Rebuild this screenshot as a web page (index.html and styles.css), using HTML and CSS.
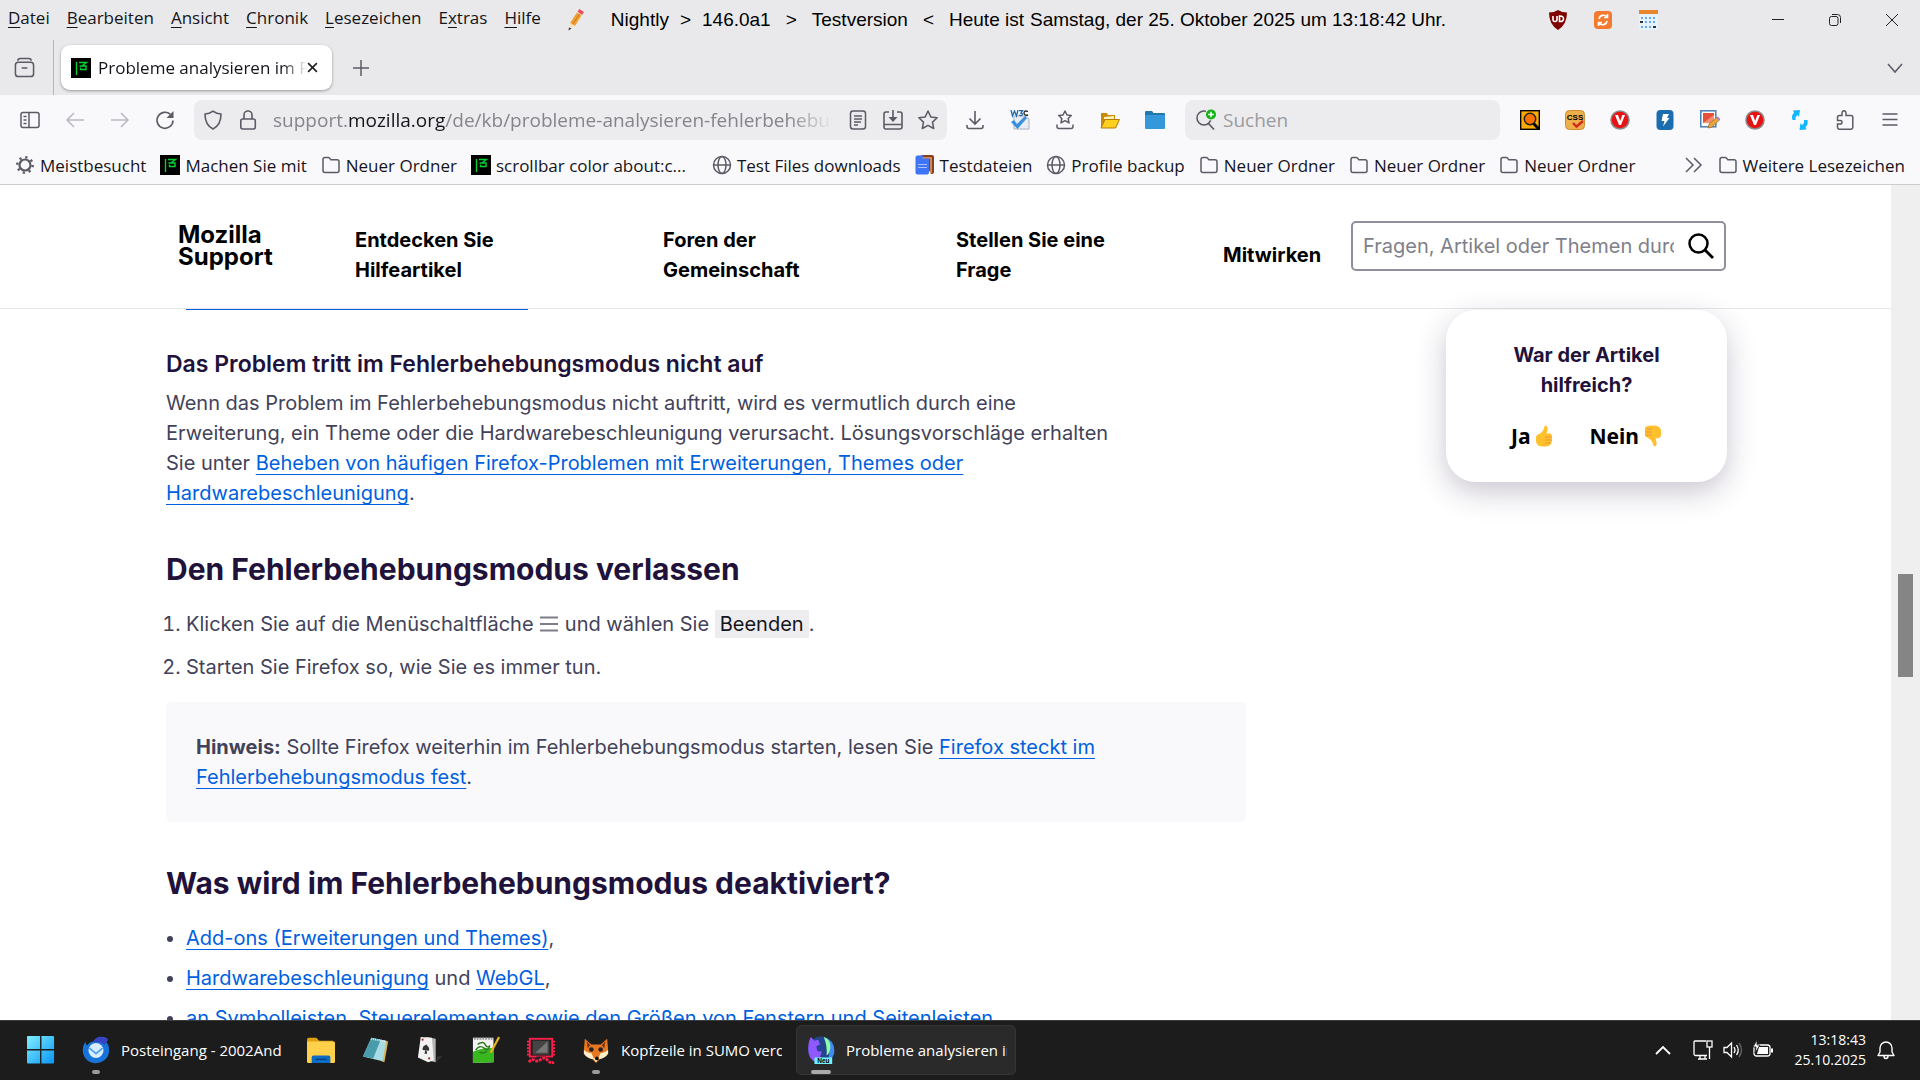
FILE: index.html
```html
<!DOCTYPE html>
<html lang="de">
<head>
<meta charset="UTF-8" />
<meta name="viewport" content="width=device-width, initial-scale=1" />
<title>Probleme analysieren im Fehlerbehebungsmodus</title>
<link rel="stylesheet" href="styles.css">
</head>
<body>

<!-- Wiederverwendete Symbole -->
<svg class="defs" aria-hidden="true">
  <symbol id="folder" viewBox="0 0 20 20"><path d="M2 4.500q0-2 2-2h3.200q.8 0 1.300.6l1.300 1.700h6.200q2 0 2 2v8.700q0 2-2 2H4q-2 0-2-2z" fill="none" stroke="#5b5b66" stroke-width="1.500"/></symbol>
  <symbol id="globe" viewBox="0 0 20 20"><g fill="none" stroke="#5b5b66" stroke-width="1.500"><circle cx="10" cy="10" r="8.500"/><ellipse cx="10" cy="10" rx="4" ry="8.500"/><path d="M1.500 10h17"/></g></symbol>
  <symbol id="moz" viewBox="0 0 20 20"><rect width="20" height="20" fill="#000"/><path d="M5.500 4v13M8 4.500h7.500L11.500 7.500M8.500 8h6.500v3.500H9.500V9.500" fill="none" stroke="#00d230" stroke-width="1.400"/></symbol>
  <symbol id="vred" viewBox="0 0 20 20"><circle cx="10" cy="10" r="9.800" fill="#8c8c8c"/><circle cx="10" cy="10" r="8.300" fill="#e81212"/><path d="M5 5h3l2.200 6L12.300 5H15l-4 10H9z" fill="#fff"/></symbol>
</svg>

<header class="browser">
  <div class="menubar">
    <nav class="menus">
      <button><u>D</u>atei</button>
      <button><u>B</u>earbeiten</button>
      <button><u>A</u>nsicht</button>
      <button><u>C</u>hronik</button>
      <button><u>L</u>esezeichen</button>
      <button>E<u>x</u>tras</button>
      <button><u>H</u>ilfe</button>
    </nav>
    <svg class="pencil" viewBox="0 0 20 22"><path d="M4 14L11 3.500l4.500 3L9 17z" fill="#f0a030"/><path d="M6.500 15.500l7-10.500" stroke="#c9781a" stroke-width="1"/><path d="M11.500 2.800L13.300 0l4.700 3-2 3z" fill="#e8505b"/><path d="M4 14l5 3-5.500 3z" fill="#f5e0c0"/><path d="M3 18.500l2.500 1L2.500 21.500z" fill="#333"/></svg>
    <div class="titletext">
      <span>Nightly</span><span>&gt;</span><span>146.0a1</span><span class="wide">&gt;</span><span class="wide">Testversion</span><span class="wide">&lt;</span><span class="wide">Heute ist</span><span class="near">Samstag, der 25. Oktober 2025 um 13:18:42 Uhr.</span>
    </div>
    <div class="title-icons">
      <button class="tool" aria-label="uBlock"><svg viewBox="0 0 20 20"><path d="M10 0q4 2.500 9 2.500 0 12-9 17.500-9-5.500-9-17.500 5 0 9-2.500z" fill="#800000"/><path d="M5 6v3.500q0 2 2 2t2-2V6M11.500 6v5.500q4 .3 4-2.700t-4-2.800z" fill="none" stroke="#fff" stroke-width="1.600"/></svg></button>
      <button class="tool" aria-label="Neu laden"><svg viewBox="0 0 20 20"><rect x="1" y="1" width="18" height="18" rx="4" fill="#f47a30"/><path d="M6 9a4.500 4.500 0 0 1 8-2M14 11a4.500 4.500 0 0 1-8 2M14.500 4v3.500H11M5.500 16v-3.500H9" fill="none" stroke="#fff" stroke-width="1.600"/></svg></button>
      <button class="tool" aria-label="Kalender"><svg viewBox="0 0 20 20"><rect x="1" width="19" height="20" fill="#e4f2fd"/><rect x="1" width="19" height="4" fill="#e8862a"/><path d="M3 8h14M3 12h15M3 17h14" stroke="#6ca8e0" stroke-width="2" stroke-dasharray="2 2"/><path d="M2 12h3M15 17h3" stroke="#333" stroke-width="2"/></svg></button>
    </div>
    <div class="winbuttons">
      <button aria-label="Minimieren"><svg viewBox="0 0 14 14"><path d="M1 6.500h12" stroke="#222"/></svg></button>
      <button aria-label="Wiederherstellen"><svg viewBox="0 0 14 14"><rect x="1.500" y="3.500" width="8.500" height="9" rx="2" fill="none" stroke="#222"/><path d="M4 1.500h5.500q3 0 3 3V10" fill="none" stroke="#222"/></svg></button>
      <button aria-label="Schließen"><svg viewBox="0 0 14 14"><path d="M1 1l12 12M13 1L1 13" stroke="#222"/></svg></button>
    </div>
  </div>

  <div class="tabstrip">
    <button class="firefox-view" aria-label="Firefox View"><svg viewBox="0 0 22 22"><g fill="none" stroke="#5b5b66" stroke-width="1.600"><path d="M4 4q0-2.500 2.500-2.500h9Q18 1.500 18 4"/><rect x="1.500" y="5.500" width="19" height="15" rx="3"/><path d="M8 11.500h6"/></g></svg></button>
    <div class="tab">
      <svg class="ico"><use href="#moz"/></svg>
      <span class="tab-title">Probleme analysieren im Fehler</span>
      <button class="tab-close" aria-label="Tab schließen"><svg viewBox="0 0 10 10"><path d="M1 1l8 8M9 1L1 9" stroke="#222" stroke-width="1.500"/></svg></button>
    </div>
    <button class="newtab" aria-label="Neuer Tab"><svg viewBox="0 0 16 16"><path d="M8 0v16M0 8h16" stroke="#5b5b66" stroke-width="1.500"/></svg></button>
    <button class="alltabs" aria-label="Alle Tabs"><svg viewBox="0 0 16 16"><path d="M1 4l7 8 7-8" fill="none" stroke="#5b5b66" stroke-width="1.500"/></svg></button>
  </div>

  <div class="navbar">
    <button class="tool" aria-label="Sidebar"><svg viewBox="0 0 20 20"><g fill="none" stroke="#5b5b66" stroke-width="1.500"><rect x="1" y="2.500" width="18" height="15" rx="2"/><path d="M9 2.500v15M3.500 6.500h3M3.500 10h3M3.500 13.500h3"/></g></svg></button>
    <button class="tool" aria-label="Zurück" disabled><svg viewBox="0 0 20 20"><path d="M19 10H2M9 3l-7 7 7 7" fill="none" stroke="#b9b9c0" stroke-width="1.500"/></svg></button>
    <button class="tool" aria-label="Vor" disabled><svg viewBox="0 0 20 20"><path d="M1 10h17M11 3l7 7-7 7" fill="none" stroke="#b9b9c0" stroke-width="1.500"/></svg></button>
    <button class="tool" aria-label="Neu laden"><svg viewBox="0 0 20 20"><path d="M18 10.500A8 8 0 1 1 15.500 4.500" fill="none" stroke="#5b5b66" stroke-width="1.600"/><path d="M18.500 1v7H11.500z" fill="#5b5b66"/></svg></button>

    <div class="urlbar">
      <svg class="ico" viewBox="0 0 20 20"><path d="M10 1.200q3.500 2.800 8 2.800 0 11-8 15-8-4-8-15 4.500 0 8-2.800z" fill="none" stroke="#5b5b66" stroke-width="1.600" stroke-linejoin="round"/></svg>
      <svg class="ico" viewBox="0 0 20 20"><g fill="none" stroke="#5b5b66" stroke-width="1.600"><rect x="2.800" y="9" width="14.500" height="10" rx="2"/><path d="M6 9V5a4 4 0 0 1 8 0v4"/></g></svg>
      <div class="url" role="textbox" aria-label="Adresse">support.<b>mozilla.org</b>/de/kb/probleme-analysieren-fehlerbehebungsmodus</div>
      <button aria-label="Leseansicht"><svg viewBox="0 0 20 20"><g fill="none" stroke="#5b5b66" stroke-width="1.500"><rect x="2.500" y="1" width="15" height="18" rx="2.500"/><path d="M6 6h8M6 9h8M6 12h7M6 15h4"/></g></svg></button>
      <button aria-label="Installieren"><svg viewBox="0 0 20 20"><g fill="none" stroke="#5b5b66" stroke-width="1.600"><path d="M6 2H3q-2 0-2 2v13q0 2 2 2h14q2 0 2-2V4q0-2-2-2h-3M1 14.500h18"/><path d="M10 0v10"/></g><path d="M5.500 7h9L10 12z" fill="#5b5b66"/></svg></button>
      <button aria-label="Lesezeichen"><svg viewBox="0 0 20 20"><path d="M10 1l2.800 5.900 6.400.8-4.700 4.400 1.200 6.400L10 15.400l-5.700 3.100 1.200-6.400L.8 7.700l6.400-.8z" fill="none" stroke="#5b5b66" stroke-width="1.500" stroke-linejoin="round"/></svg></button>
    </div>

    <button class="tool" aria-label="Downloads"><svg viewBox="0 0 20 20"><path d="M10 1v13M4.500 8.500L10 14l5.500-5.500M2 15v1.500q0 2 2 2h12q2 0 2-2V15" fill="none" stroke="#5b5b66" stroke-width="1.600"/></svg></button>
    <button class="tool" aria-label="W3C"><svg viewBox="0 0 20 20"><path d="M4 6h11l4 3v10H4z" fill="#e8edf3" stroke="#a9b3bf"/><path d="M1 0l1.500 6L4.500 1l2 5L8 0M9 .700h3.500L11 3q2 .5 1 2.300Q11 6 9 5" fill="none" stroke="#1c66ad" stroke-width="1.300"/><path d="M18 1.500q-4-1.500-4 1.500t4 2" fill="none" stroke="#222" stroke-width="1.300"/><path d="M1 12l3-2 3 4 8-8 2 2-9.500 11z" fill="#3a8fe0"/></svg></button>
    <button class="tool" aria-label="Lesezeichen-Menü"><svg viewBox="0 0 20 20"><path d="M10 1l2 4 4.300.5-3.100 3 .8 4.400-4-2.200-4 2.200.8-4.400-3.100-3L8 5zM2 14.500v2q0 2 2 2h12q2 0 2-2v-2" fill="none" stroke="#5b5b66" stroke-width="1.500" stroke-linejoin="round"/></svg></button>
    <button class="tool" aria-label="Ordner öffnen"><svg viewBox="0 0 20 20"><path d="M1 18V3h6l1 2h7v4h4L16 18z" fill="#c98a08"/><path d="M1 18L5 9.500h14.500L15.500 18z" fill="#ffd020" stroke="#b87a05"/><path d="M4 9V7l10-1v3z" fill="#fff3b0"/></svg></button>
    <button class="tool" aria-label="Profilordner"><svg viewBox="0 0 20 20"><path d="M0 2q0-1 1-1h6l1.500 2H19q1 0 1 1v4H0z" fill="#2478ae"/><rect y="5" width="20" height="14" rx="1" fill="#3598db"/></svg></button>

    <div class="searchbar">
      <svg class="ico" viewBox="0 0 22 22"><circle cx="9" cy="9" r="7" fill="none" stroke="#5b5b66" stroke-width="1.600"/><path d="M13 14l6 6.500" stroke="#5b5b66" stroke-width="1.700"/><circle cx="16" cy="5.500" r="6" fill="#ececee"/><circle cx="16" cy="5.500" r="5" fill="#12b312"/><path d="M16 2.700v5.600M13.200 5.500h5.600" stroke="#fff" stroke-width="1.500"/></svg>
      <input type="text" placeholder="Suchen" aria-label="Suchen">
    </div>

    <button class="tool" aria-label="Seitensuche"><svg viewBox="0 0 20 20"><rect x=".7" y=".7" width="18.600" height="18.600" fill="#ffab00" stroke="#000" stroke-width="1.400"/><path d="M13 13l6 6" stroke="#000" stroke-width="3"/><circle cx="10" cy="9" r="5.700" fill="#ff7200" stroke="#222" stroke-width="1.500"/></svg></button>
    <button class="tool" aria-label="CSS"><svg viewBox="0 0 20 20"><rect x=".5" y=".5" width="19" height="19" rx="4" fill="#eeb04a" stroke="#cf8c2e"/><text x="10" y="9.500" text-anchor="middle" class="css-txt">CSS</text><path d="M8 13l3.500 3.500L18 11" fill="none" stroke="#d32a20" stroke-width="2.400"/></svg></button>
    <button class="tool" aria-label="V"><svg><use href="#vred"/></svg></button>
    <button class="tool" aria-label="Blitz"><svg viewBox="0 0 20 20"><rect x="1.500" width="17" height="20" rx="4" fill="#1c6cb0"/><path d="M8 4h6l-2 4h2.500L8 16.500 9.500 11H6.500z" fill="#fff"/></svg></button>
    <button class="tool" aria-label="Bild bearbeiten"><svg viewBox="0 0 20 20"><rect x=".8" y=".8" width="15" height="16" fill="#fff" stroke="#4a7fb5" stroke-width="1.500"/><rect x="3" y="3" width="11" height="10" fill="#e8503c"/><path d="M3 13L14 5v8z" fill="#f59070"/><path d="M8 18l1-4 8-7 3 2.500-8 7.500z" fill="#eaa53a" stroke="#9c6a2a" stroke-width=".7"/><path d="M16 8l2-1.500L20 9l-1.500 1.500z" fill="#b67fd0"/></svg></button>
    <button class="tool" aria-label="V"><svg><use href="#vred"/></svg></button>
    <button class="tool" aria-label="Synchronisieren"><svg viewBox="0 0 20 20"><path d="M2.500 10Q1 5 4 3L3 .5 10 0 9 7 7.500 5Q5 6.500 5.500 10zM17.500 10q1 5-2 7l1 2.500-7 .5 1-7 1.500 2q2.500-1.500 2-5z" fill="#12b8ff"/></svg></button>
    <button class="tool" aria-label="Erweiterungen"><svg viewBox="0 0 20 20"><path d="M2.500 7.500q0-2 2-2H7V3q0-2.300 2-2.300T11 3v2.500h5q1.800 0 1.800 1.800v10q0 2-2 2H4.500q-2 0-2-2V14H5q2 0 2-1.800T5 10.500H2.500z" fill="none" stroke="#5b5b66" stroke-width="1.500"/></svg></button>
    <button class="tool" aria-label="Menü"><svg viewBox="0 0 20 20"><path d="M2.500 4h15M2.500 9.500h15M2.500 15h15" stroke="#5b5b66" stroke-width="1.500"/></svg></button>
  </div>

  <div class="bookmarks">
    <a href="#"><svg class="ico" viewBox="0 0 20 20"><circle cx="10" cy="10" r="5.500" fill="none" stroke="#5b5b66" stroke-width="2.200"/><circle cx="10" cy="10" r="7.700" fill="none" stroke="#5b5b66" stroke-width="2.500" stroke-dasharray="2.200 3.850"/></svg>Meistbesucht</a>
    <a href="#"><svg class="ico"><use href="#moz"/></svg>Machen Sie mit</a>
    <a href="#"><svg class="ico"><use href="#folder"/></svg>Neuer Ordner</a>
    <a href="#" class="long"><svg class="ico"><use href="#moz"/></svg>scrollbar color about:c...</a>
    <a href="#"><svg class="ico"><use href="#globe"/></svg>Test Files downloads</a>
    <a href="#"><svg class="ico" viewBox="0 0 20 20"><path d="M6 0h11q2 0 2 2v15q0 2-3 2z" fill="#8a3f20"/><path d="M8 3h8v15" stroke="#e8a06a" stroke-width="1.500" fill="none"/><path d="M2.500.5H9q-1.500 1-1.500 3H14v14q0 2-2 2H2.500q-2 0-2-2v-15q0-2 2-2z" fill="#3f74f5"/><path d="M3 9.500h9M3 12.500h9" stroke="#a9c2ff"/></svg>Testdateien</a>
    <a href="#"><svg class="ico"><use href="#globe"/></svg>Profile backup</a>
    <a href="#"><svg class="ico"><use href="#folder"/></svg>Neuer Ordner</a>
    <a href="#"><svg class="ico"><use href="#folder"/></svg>Neuer Ordner</a>
    <a href="#"><svg class="ico"><use href="#folder"/></svg>Neuer Ordner</a>
    <button class="more" aria-label="Mehr Lesezeichen"><svg class="ico" viewBox="0 0 20 20"><path d="M2 3l7 7-7 7M10 3l7 7-7 7" fill="none" stroke="#5b5b66" stroke-width="1.500"/></svg></button>
    <a href="#"><svg class="ico"><use href="#folder"/></svg>Weitere Lesezeichen</a>
  </div>
</header>

<div class="viewport">
  <div class="page">
    <header class="sumo-header">
      <a href="#" class="logo">Mozilla<br>Support</a>
      <nav class="sumo-nav">
        <a href="#">Entdecken Sie Hilfeartikel</a>
        <a href="#">Foren der Gemeinschaft</a>
        <a href="#">Stellen Sie eine Frage</a>
        <a href="#">Mitwirken</a>
      </nav>
      <form class="sumo-search">
        <input type="text" placeholder="Fragen, Artikel oder Themen durchsuchen" aria-label="Suche">
        <button type="button" aria-label="Suchen"><svg viewBox="0 0 26 26"><circle cx="10.500" cy="10.500" r="9" fill="none" stroke="#000" stroke-width="2.500"/><path d="M17 17l8 8" stroke="#000" stroke-width="2.800"/></svg></button>
      </form>
    </header>

    <div class="columns">
      <article>
        <div class="cut-link"></div>
        <h3>Das Problem tritt im Fehlerbehebungsmodus nicht auf</h3>
        <p>Wenn das Problem im Fehlerbehebungsmodus nicht auftritt, wird es vermutlich durch eine Erweiterung, ein Theme oder die Hardwarebeschleunigung verursacht. Lösungsvorschläge erhalten Sie unter <a href="#">Beheben von häufigen Firefox-Problemen mit Erweiterungen, Themes oder Hardwarebeschleunigung</a>.</p>

        <h2>Den Fehlerbehebungsmodus verlassen</h2>
        <ol>
          <li>Klicken Sie auf die Menüschaltfläche <svg class="burger" viewBox="0 0 20 20"><path d="M1 3.500h18M1 10h18M1 16.500h18" stroke="#7d7d86" stroke-width="2"/></svg> und wählen Sie <span class="button-label">Beenden</span>.</li>
          <li>Starten Sie Firefox so, wie Sie es immer tun.</li>
        </ol>
        <div class="note"><strong>Hinweis:</strong> Sollte Firefox weiterhin im Fehlerbehebungsmodus starten, lesen Sie <a href="#">Firefox steckt im Fehlerbehebungsmodus fest</a>.</div>

        <h2>Was wird im Fehlerbehebungsmodus deaktiviert?</h2>
        <ul>
          <li><a href="#">Add-ons (Erweiterungen und Themes)</a>,</li>
          <li><a href="#">Hardwarebeschleunigung</a> und <a href="#">WebGL</a>,</li>
          <li><a href="#">an Symbolleisten, Steuerelementen sowie den Größen von Fenstern und Seitenleisten</a></li>
        </ul>
      </article>

      <aside class="vote">
        <h4>War der Artikel hilfreich?</h4>
        <div class="vote-buttons">
          <button>Ja <svg viewBox="0 0 18 22"><path d="M1 12q0-2 3-3 4-2 5-6 .3-2.500 1.700-2.500Q13 1 12.500 5q-.3 2-1 3.500h4q1.800.5 1.300 2.500 1 1.500 0 3 .8 1.700-.3 3 .3 1.700-1 2.500Q14 21.500 9 21.500 1 21.500 1 16z" fill="#ffc02e"/><path d="M10 12h6.500M10 15h6.500M10 18h5.500" stroke="#e8963a" stroke-width="1"/></svg></button>
          <button>Nein <svg viewBox="0 0 18 22"><path d="M1 10q0 2 3 3 4 2 5 6 .3 2.500 1.700 2.500Q13 21 12.500 17q-.3-2-1-3.500 5 0 5.500-3V5Q16 .5 9 .5 1 .5 1 3z" fill="#ffc02e"/><path d="M8 10H1.500M8 7H1.500M8 4H2.500" stroke="#e8963a" stroke-width="1"/></svg></button>
        </div>
      </aside>
    </div>
  </div>
  <div class="scrollbar"><div class="thumb"></div></div>
</div>

<footer class="taskbar">
  <button class="task" aria-label="Start"><svg viewBox="0 0 30 30"><defs><linearGradient id="win" x2="1" y2="1"><stop stop-color="#7fefff"/><stop offset="1" stop-color="#0a95f5"/></linearGradient></defs><path d="M0 1q0-1 1-1h13v14H0zM15.500 0H28q1 0 1 1v13H15.500zM0 15.500h14v14H1q-1 0-1-1zM15.500 15.500H29v13q0 1-1 1H15.500z" fill="url(#win)"/></svg></button>
  <button class="task named running"><svg viewBox="0 0 30 30"><path d="M4 5Q-2 15 3 23q5 7 13 6 13-2 13-14 0-6-3-8 2-3 1-4-3-3-9-2-4 1-6 5-5 1-6 4Q3 9 4 5z" fill="#1873d9"/><path d="M12 7Q14 1 21 1q5 0 7 3-3 2-3 6-6-5-13-3z" fill="#3a42c4"/><circle cx="15" cy="15.500" r="8" fill="#d8ecff"/><path d="M8 13l7 6 7-6" fill="none" stroke="#4da0f0" stroke-width="1.800"/></svg><span>Posteingang - 2002Andreas</span></button>
  <button class="task" aria-label="Explorer"><svg viewBox="0 0 30 30"><path d="M0 4q0-2 2-2h8l3 3h15v8H0z" fill="#e0a010"/><rect y="6" width="30" height="23" rx="1.500" fill="#ffd04a"/><path d="M5 29v-6q0-2 2-2h16q2 0 2 2v6z" fill="#0a6cc4"/><path d="M9 25h12" stroke="#0a3f80" stroke-width="1.500"/></svg></button>
  <button class="task" aria-label="Editor"><svg viewBox="0 0 30 30"><path d="M11 3l17 3-4 22-3-1z" fill="#d9b45a"/><path d="M10 2l16 3-4 22-21-5z" fill="#a8dce4"/><path d="M10 2l10 2-8 20-11-2z" fill="#4a9cab"/><path d="M10 3l16 3" stroke="#eee" stroke-width="2" stroke-dasharray="1 1"/></svg></button>
  <button class="task" aria-label="Karten"><svg viewBox="0 0 30 30"><path d="M20 28l8-7-6 1z" fill="#333"/><path d="M10 1l10 2v25l-9-2z" fill="#b5b5b5"/><path d="M4 1l12 1 2 24-6 2L1 23z" fill="#f2f2f2"/><path d="M10 9q5 5 2 7l-2-1 1 4H8l1-4q-4 1-3-2 0-2 4-4z" fill="#333"/><circle cx="6" cy="4" r="1.200" fill="#a33"/><circle cx="13" cy="24" r="1.200" fill="#a33"/></svg></button>
  <button class="task" aria-label="Notepad++"><svg viewBox="0 0 30 30"><path d="M1 2h22v26l-22 1z" fill="#f2f2f2"/><path d="M1 17q10-5 22-4v15l-22 1z" fill="#38b81e"/><path d="M6 9q6-4 8 0t4 2M4 15q4-6 9-2t6-3M8 17q4 3 8-1" fill="none" stroke="#2d7a1e" stroke-width="1.500"/><path d="M2 3h20" stroke="#999" stroke-width="2" stroke-dasharray="2 1"/><path d="M29 1L20 18" stroke="#e0b020" stroke-width="2.500"/></svg></button>
  <button class="task" aria-label="System"><svg viewBox="0 0 30 30"><rect x="3" y="3" width="24" height="19" fill="none" stroke="#ff1f4b" stroke-width="2"/><path d="M1 5v16M29 5v16" stroke="#ff1f4b" stroke-width="3" stroke-dasharray="2 1.500"/><rect x="6" y="5" width="18" height="15" fill="#444"/><path d="M9 18L22 6v12z" fill="#777"/><path d="M10 22h10v3H10z" fill="#222"/><path d="M2 28q3-4 6-2t7-1 7 1 7 2" fill="none" stroke="#ff1f4b" stroke-width="3" stroke-dasharray="3 1"/></svg></button>
  <button class="task named running"><svg viewBox="0 0 30 30"><path d="M3 3l7 6h10l7-6 1 12q-2 7-9 10l-4 4-4-4Q4 22 2 15z" fill="#e87722"/><path d="M5 6l4 4-3 3zM25 6l-4 4 3 3z" fill="#7a3a14"/><path d="M2 15q5 4 8 3l3 7q-8-1-11-6zM28 15q-5 4-8 3l-3 7q8-1 11-6zM12 24h6l-3 4z" fill="#ffeec8"/><circle cx="10" cy="14.500" r="2.500" fill="#222"/><circle cx="20" cy="14.500" r="2.500" fill="#222"/><circle cx="16" cy="24" r="2" fill="#111"/></svg><span>Kopfzeile in SUMO verdeckt</span></button>
  <button class="task named running active"><svg viewBox="0 0 30 30"><ellipse cx="15" cy="15" rx="14" ry="14.500" fill="#24448f"/><path d="M18 1q13 4 11 18-2 6-7 9 5-13-4-27z" fill="#3f8cf5"/><path d="M18 1q8 3 7 12-1 6-4 8 1-10-3-20z" fill="#8effa0"/><path d="M4 1l4 4 4-1 2 5-4 2 1 5 5 1-2 5 4 3-2 4Q4 29 2 19 0 9 4 1z" fill="#9059ff"/><rect x="8" y="23" width="19" height="7" fill="#6ff5ff"/><text x="17.500" y="29" text-anchor="middle" class="neu-txt">Neu</text></svg><span>Probleme analysieren im Fehler</span></button>

  <div class="tray">
    <button aria-label="Ausgeblendete Symbole"><svg viewBox="0 0 20 20"><path d="M3 14l7-7 7 7" fill="none" stroke="#fff" stroke-width="1.800"/></svg></button>
    <div class="status">
      <svg viewBox="0 0 20 20"><g fill="none" stroke="#fff" stroke-width="1.300"><path d="M13 1H2Q1 1 1 2v12q0 1.500 1.500 1.500H14M5 19h9M7 15.500V19M12 15.500V19"/><rect x="14" y="1" width="5" height="6"/><path d="M16.500 7v12"/></g></svg>
      <svg viewBox="0 0 20 20"><g fill="none" stroke="#fff" stroke-width="1.300"><path d="M1 7.500h3L8.500 3v14L4 12.500H1z"/><path d="M11 7q2 3 0 6M13.500 5q3.500 5 0 10"/><path d="M16 3q5 7 0 14" stroke="#666"/></g></svg>
      <svg viewBox="0 0 20 20"><rect x="1" y="5" width="16" height="11" rx="2.500" fill="none" stroke="#fff" stroke-width="1.300"/><path d="M6 7h9v7H4z" fill="#fff"/><path d="M18 8.500h2v4h-2z" fill="#fff"/><path d="M4 0L0 7h3l-1 6 5-8H4z" fill="#fff" stroke="#1c1c1c" stroke-width=".8"/></svg>
    </div>
    <div class="clock">13:18:43<br>25.10.2025</div>
    <button aria-label="Benachrichtigungen"><svg viewBox="0 0 20 20"><path d="M2 15.500h16l-2-3.500V8A6 6 0 0 0 4 8v4zM8 16q0 2.500 2 2.500t2-2.500" fill="none" stroke="#fff" stroke-width="1.400" stroke-linejoin="round"/></svg></button>
  </div>
</footer>

</body>
</html>
```
FILE: styles.css
```css
* {
  box-sizing: border-box;
}

body {
  margin: 0;
  height: 100vh;
  display: flex;
  flex-direction: column;
  overflow: hidden;
  background: #fff;
  color: #15141a;
  font-family: "Open Sans", "Noto Sans", sans-serif;
  font-size: 17px;
}

button {
  border: none;
  background: none;
  padding: 0;
  font: inherit;
  color: inherit;
  display: flex;
  align-items: center;
  justify-content: center;
}

a {
  color: inherit;
  text-decoration: none;
}

svg {
  display: block;
  flex-shrink: 0;
}

.defs {
  position: absolute;
  width: 0;
  height: 0;
}

.ico {
  width: 20px;
  height: 20px;
}

/* Browserfenster */
.browser {
  flex: none;
  background: #e9e9eb;
  border-bottom: 1px solid #cccccf;
}

.menubar {
  display: flex;
  height: 40px;
  padding-left: 8px;
}

.menus {
  display: flex;
  gap: 17px;
  height: 34px;
}

.menus u {
  text-underline-offset: 3px;
}

.pencil {
  width: 20px;
  height: 22px;
  margin: 9px 0 0 25px;
}

.titletext {
  display: flex;
  align-items: center;
  gap: 11px;
  margin-left: 25px;
  font-family: "Liberation Sans", Arial, sans-serif;
  font-size: 19px;
  color: #000;
  white-space: nowrap;
}

.titletext .wide {
  margin-left: 4px;
}

.titletext .near {
  margin-left: -5px;
}

.title-icons {
  display: flex;
  margin-left: auto;
  margin-right: 79px;
}

.winbuttons {
  display: flex;
}

.winbuttons button {
  width: 57px;
}

.winbuttons svg {
  width: 14px;
  height: 14px;
}

.tool {
  width: 45px;
  height: 40px;
  flex: none;
}

.tool svg {
  width: 20px;
  height: 20px;
}

.css-txt {
  font: bold 8px "Liberation Sans", sans-serif;
}

.tabstrip {
  display: flex;
  align-items: center;
  height: 55px;
}

.firefox-view {
  width: 54px;
  height: 55px;
  border-right: 1px solid #b5b5b9;
  padding-right: 4px;
}

.firefox-view svg {
  width: 21px;
  height: 21px;
}

.tab {
  display: flex;
  align-items: center;
  width: 271px;
  height: 45px;
  margin-left: 7px;
  padding: 0 14px 0 10px;
  background: #fff;
  border-radius: 9px;
  box-shadow: 0 1px 3px rgba(0, 0, 0, 0.35);
}

.tab-title {
  flex: 1;
  min-width: 0;
  margin-left: 7px;
  overflow: hidden;
  white-space: nowrap;
  mask-image: linear-gradient(90deg, #000 88%, transparent);
}

.tab-close svg {
  width: 11px;
  height: 11px;
}

.newtab {
  margin-left: 21px;
}

.newtab svg,
.alltabs svg {
  width: 16px;
  height: 16px;
}

.alltabs {
  margin-left: auto;
  margin-right: 17px;
}

.navbar {
  display: flex;
  align-items: center;
  height: 50px;
  padding: 0 8px 0 7px;
  background: #f9f9fb;
}

.urlbar {
  display: flex;
  align-items: center;
  flex: 1;
  min-width: 0;
  height: 40px;
  margin: 0 5px 0 7px;
  padding: 0 9px 0 9px;
  gap: 15px;
  background: #ececee;
  border-radius: 8px;
}

.urlbar svg {
  width: 20px;
  height: 20px;
}

.url {
  flex: 1;
  min-width: 0;
  overflow: hidden;
  white-space: nowrap;
  font-size: 19px;
  color: #85858b;
  mask-image: linear-gradient(90deg, #000 92%, transparent);
}

.url b {
  font-weight: 400;
  color: #15141a;
}

.searchbar {
  display: flex;
  align-items: center;
  width: 315px;
  height: 40px;
  margin: 0 7px 0 8px;
  padding: 0 10px;
  gap: 6px;
  background: #ececee;
  border-radius: 8px;
}

.searchbar .ico {
  width: 22px;
  height: 22px;
}

.searchbar input {
  flex: 1;
  min-width: 0;
  border: none;
  padding: 0;
  background: none;
  font: inherit;
  font-size: 19px;
}

.searchbar input::placeholder {
  color: #9b9ba0;
}

.bookmarks {
  display: flex;
  align-items: center;
  gap: 14px;
  height: 39px;
  padding: 1px 15px 0;
  background: #f9f9fb;
  white-space: nowrap;
}

.bookmarks a {
  display: flex;
  align-items: center;
  gap: 5px;
}

.bookmarks .long {
  width: 227px;
}

.bookmarks .more {
  margin-left: auto;
}

/* Webseite */
.viewport {
  flex: 1;
  min-height: 0;
  display: flex;
}

.page {
  flex: 1;
  min-width: 0;
  overflow: hidden;
  font-family: Inter, sans-serif;
  font-size: 20px;
  line-height: 30px;
  color: #42425a;
}

.scrollbar {
  width: 29px;
  padding-left: 7px;
  background: #efefef;
}

.thumb {
  width: 15px;
  height: 103px;
  margin-top: 389px;
  background: #858585;
}

.sumo-header {
  display: flex;
  height: 124px;
  padding: 0 165px 0 178px;
  background: #fff;
  border-bottom: 1px solid #e7e7ea;
  color: #000;
}

.logo {
  width: 177px;
  margin-top: 39px;
  font-size: 24px;
  font-weight: 700;
  line-height: 22px;
}

.sumo-nav {
  flex: 1;
  display: grid;
  grid-template-columns: 308fr 293fr 267fr 128fr;
  align-items: center;
  padding-top: 17px;
  font-weight: 700;
}

.sumo-nav a {
  max-width: 160px;
}

.sumo-search {
  display: flex;
  align-items: center;
  width: 375px;
  height: 50px;
  margin-top: 36px;
  padding: 0 10px;
  gap: 14px;
  border: 2px solid #8f8f9d;
  border-radius: 5px;
}

.sumo-search input {
  flex: 1;
  min-width: 0;
  border: none;
  padding: 0;
  font: inherit;
  color: #42425a;
}

.sumo-search input::placeholder {
  color: #80808a;
}

.sumo-search svg {
  width: 26px;
  height: 26px;
}

.columns {
  display: grid;
  grid-template-columns: minmax(0, 1080px) 281px;
  justify-content: space-between;
  align-items: start;
  padding: 0 164px 0 166px;
}

.page article a {
  color: #0060df;
  text-decoration: underline;
  text-decoration-thickness: 1px;
  text-underline-offset: 4px;
}

/* Rest der Linkzeile unter dem fixierten Kopf */
.cut-link {
  width: 342px;
  height: 1px;
  margin: 0 0 39px 20px;
  background: #0060df;
}

h2,
h3,
h4 {
  margin: 0;
  color: #20123a;
}

h3 {
  margin-bottom: 9px;
  font-size: 23px;
  font-weight: 600;
}

h2 {
  margin: 43px 0 22px;
  font-size: 30px;
  line-height: 36px;
  font-weight: 700;
}

article p {
  margin: 0;
  max-width: 950px;
}

article ol,
article ul {
  margin: 0;
  padding-left: 20px;
  display: flex;
  flex-direction: column;
  gap: 13px;
}

article ul {
  gap: 10px;
}

.burger {
  display: inline-block;
  width: 20px;
  height: 20px;
  vertical-align: -3px;
}

.button-label {
  padding: 2px 5px;
  background: #ededf0;
  color: #15141a;
}

.note {
  margin-top: 20px;
  padding: 30px;
  background: #f9f9fb;
  border-radius: 5px;
}

.vote {
  margin-top: 1px;
  padding: 30px 40px;
  height: 172px;
  border-radius: 30px;
  background: #fff;
  box-shadow: 0 10px 30px rgba(32, 18, 58, 0.24);
  text-align: center;
}

.vote h4 {
  font-size: 20px;
  font-weight: 700;
}

.vote-buttons {
  display: flex;
  justify-content: center;
  gap: 36px;
  margin-top: 21px;
  font-family: "Noto Sans", sans-serif;
  font-size: 21px;
  font-weight: 700;
  color: #000;
}

.vote-buttons button {
  gap: 5px;
}

.vote-buttons svg {
  width: 18px;
  height: 22px;
}

/* Taskleiste */
.taskbar {
  flex: none;
  display: flex;
  align-items: center;
  gap: 5px;
  height: 60px;
  padding: 0 24px 1px 16px;
  background: #1c1c1c;
  border-top: 1px solid #3c3c3c;
  color: #fff;
  font-size: 15px;
}

.task {
  position: relative;
  width: 50px;
  height: 50px;
  border: 1px solid transparent;
  border-radius: 5px;
}

.task svg {
  width: 28px;
  height: 28px;
}

.named {
  width: 220px;
  justify-content: flex-start;
  padding: 0 8px 0 10px;
  gap: 11px;
}

.named span {
  flex: 1;
  min-width: 0;
  overflow: hidden;
  white-space: nowrap;
  text-align: left;
}

.running::after {
  content: "";
  position: absolute;
  left: 20px;
  bottom: 0;
  width: 8px;
  height: 4px;
  border-radius: 2px;
  background: #999;
}

.active {
  background: #2a2a2a;
  border-color: #353535;
}

.active::after {
  left: 14px;
  width: 20px;
  background: #aaa;
}

.neu-txt {
  font: bold 7px "Liberation Sans", sans-serif;
}

.tray {
  display: flex;
  align-items: center;
  margin-left: auto;
}

.tray svg {
  width: 20px;
  height: 20px;
}

.status {
  display: flex;
  gap: 10px;
  margin: 0 20px;
}

.clock {
  width: 73px;
  margin-right: 10px;
  font-size: 14px;
  line-height: 20px;
  text-align: right;
}
```
